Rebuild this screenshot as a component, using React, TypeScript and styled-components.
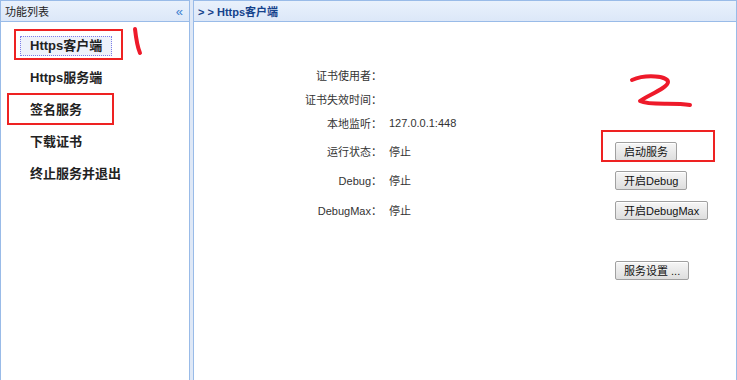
import React from 'react';
import styled, { createGlobalStyle } from 'styled-components';

const GlobalStyle = createGlobalStyle`
  html, body {
    margin: 0;
    padding: 0;
    background: #ffffff;
  }
  body {
    font-family: "Liberation Sans", "Noto Sans CJK SC", sans-serif;
    font-size: 12px;
    color: #222;
  }
`;

const Page = styled.div`
  position: relative;
  display: flex;
  width: 737px;
  height: 380px;
  overflow: hidden;
  background: #fff;
`;

const Panel = styled.div<{ $width?: number }>`
  display: flex;
  flex-direction: column;
  ${(p) => (p.$width ? `width: ${p.$width}px; flex: none;` : 'flex: 1;')}
  border-left: 1px solid #99bbe8;
  border-right: 1px solid #99bbe8;
  border-top: 1px solid #99bbe8;
  box-sizing: border-box;
`;

const Splitter = styled.div`
  width: 3px;
  flex: none;
  background: #dfe8f6;
`;

const Header = styled.div`
  height: 21px;
  flex: none;
  display: flex;
  align-items: center;
  justify-content: space-between;
  padding: 0 6px 0 4px;
  background: linear-gradient(#e9f1fc, #dce7f8);
  border-bottom: 1px solid #99bbe8;
  box-sizing: border-box;
  font-size: 11px;
  color: #15428b;
`;

const HeaderTitle = styled.span<{ $bold?: boolean }>`
  font-weight: ${(p) => (p.$bold ? 'bold' : 'normal')};
  color: ${(p) => (p.$bold ? '#15428b' : '#222')};
`;

const Collapse = styled.span`
  color: #3d7ecf;
  font-size: 13px;
  line-height: 1;
`;

const Menu = styled.ul`
  list-style: none;
  margin: 0;
  padding: 14px 0 0 19px;
  display: flex;
  flex-direction: column;
  gap: 12px;
`;

const MenuItem = styled.li<{ $active?: boolean }>`
  align-self: flex-start;
  height: 20px;
  line-height: 18px;
  padding: 0 9px;
  font-size: 13px;
  font-weight: bold;
  color: #222;
  box-sizing: border-box;
  border: 1px dotted ${(p) => (p.$active ? '#7d7de8' : 'transparent')};
  background: ${(p) => (p.$active ? '#eef2fb' : 'transparent')};
`;

const Content = styled.div`
  display: flex;
  flex-direction: column;
  padding-top: 41px;
  font-size: 11px;
  color: #333;
`;

const Row = styled.div<{ $gap?: number }>`
  display: grid;
  grid-template-columns: 190px 231px auto;
  align-items: center;
  height: 24px;
  margin-top: ${(p) => p.$gap ?? 0}px;
`;

const Label = styled.div`
  text-align: right;
  padding-right: 2px;
`;

const Value = styled.div`
  padding-left: 5px;
`;

const Cell = styled.div``;

const Button = styled.button`
  font-family: "Liberation Sans", "Noto Sans CJK SC", sans-serif;
  font-size: 11px;
  color: #111;
  height: 19px;
  padding: 0 8px;
  border: 1px solid #a0a0a0;
  border-radius: 2px;
  background: linear-gradient(#f6f6f6, #dedede);
  box-shadow: inset 0 1px 0 #fff;
  cursor: pointer;
`;

const Mark = styled.div<{ $x: number; $y: number; $w: number; $h: number }>`
  position: absolute;
  left: ${(p) => p.$x}px;
  top: ${(p) => p.$y}px;
  width: ${(p) => p.$w}px;
  height: ${(p) => p.$h}px;
  border: 2px solid #ee2222;
  box-sizing: border-box;
  pointer-events: none;
`;

const Scribble = styled.svg<{ $x: number; $y: number }>`
  position: absolute;
  left: ${(p) => p.$x}px;
  top: ${(p) => p.$y}px;
  overflow: visible;
  pointer-events: none;
`;

const menu = ['Https客户端', 'Https服务端', '签名服务', '下载证书', '终止服务并退出'];

type RowData = { label: string; value?: string; action?: string; gap?: number };

const rows: RowData[] = [
  { label: '证书使用者：' },
  { label: '证书失效时间：' },
  { label: '本地监听：', value: '127.0.0.1:448' },
  { label: '运行状态：', value: '停止', action: '启动服务', gap: 4 },
  { label: 'Debug：', value: '停止', action: '开启Debug', gap: 5 },
  { label: 'DebugMax：', value: '停止', action: '开启DebugMax', gap: 6 },
  { label: '', action: '服务设置 ...', gap: 36 },
];

export default function App() {
  return (
    <>
      <GlobalStyle />
      <Page>
        <Panel $width={190}>
          <Header>
            <HeaderTitle>功能列表</HeaderTitle>
            <Collapse>«</Collapse>
          </Header>
          <Menu>
            {menu.map((m, i) => (
              <MenuItem key={m} $active={i === 0}>
                {m}
              </MenuItem>
            ))}
          </Menu>
        </Panel>
        <Splitter />
        <Panel>
          <Header>
            <HeaderTitle $bold>&gt; &gt; Https客户端</HeaderTitle>
          </Header>
          <Content>
            {rows.map((r, i) => (
              <Row key={i} $gap={r.gap}>
                <Label>{r.label}</Label>
                <Value>{r.value}</Value>
                <Cell>{r.action ? <Button>{r.action}</Button> : null}</Cell>
              </Row>
            ))}
          </Content>
        </Panel>

        <Mark $x={14} $y={29} $w={109} $h={31} />
        <Mark $x={7} $y={93} $w={107} $h={32} />
        <Mark $x={601} $y={130} $w={114} $h={32} />
        <Scribble $x={130} $y={26} width="16" height="30">
          <path d="M5 3 C6 12, 7 20, 10 27" stroke="#ee1a2a" strokeWidth="4" strokeLinecap="round" fill="none" />
        </Scribble>
        <Scribble $x={628} $y={74} width="66" height="38">
          <path
            d="M4 6 C18 0, 40 2, 40 8 C40 14, 18 22, 12 27 C22 32, 44 28, 62 31"
            stroke="#ee1a2a"
            strokeWidth="4"
            strokeLinecap="round"
            strokeLinejoin="round"
            fill="none"
          />
        </Scribble>
      </Page>
    </>
  );
}
